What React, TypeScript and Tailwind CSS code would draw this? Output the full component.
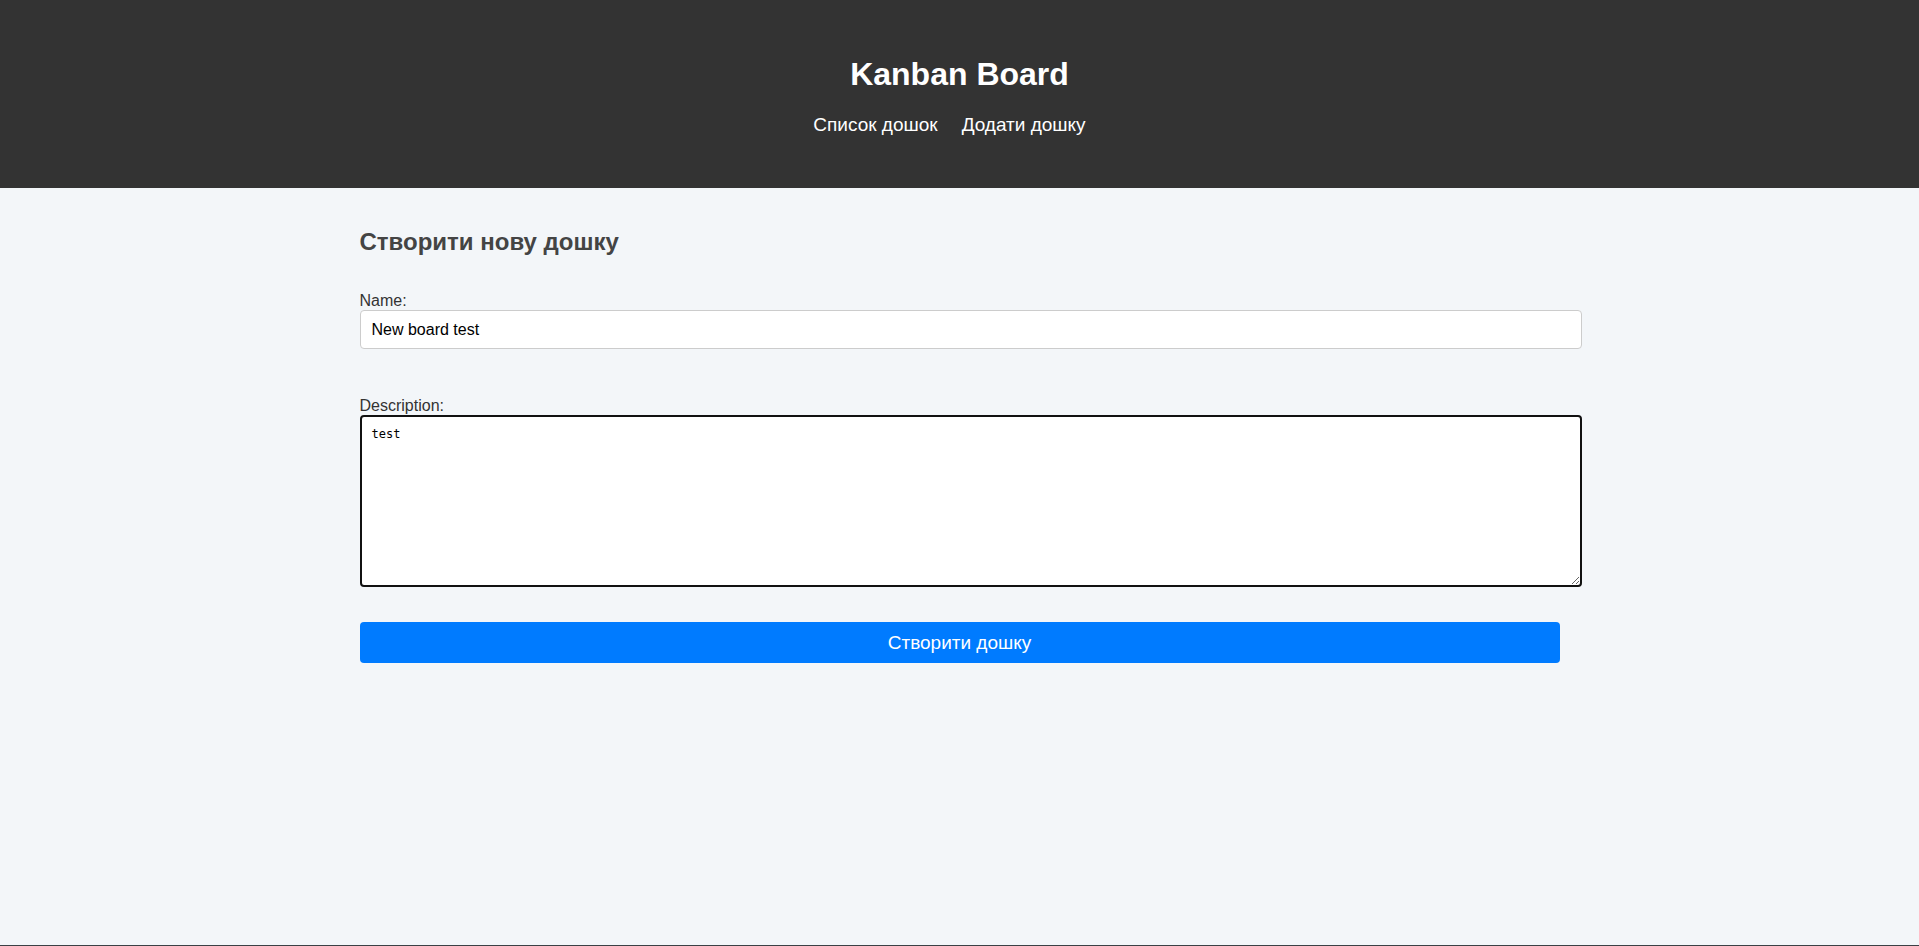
export default function App() {
  return (
    <div className="min-h-[946px] flex flex-col bg-[#f3f6f9]" style={{ fontFamily: '"Liberation Sans", Arial, sans-serif' }}>
      <header className="h-[188px] bg-[#333333] flex flex-col items-center pt-[56px] text-white">
        <h1 className="text-[32px] font-bold leading-[37px]">Kanban Board</h1>
        <nav className="mt-[21px] flex gap-[24px] pr-[20px] text-[19px] leading-[22px]">
          <a href="#" className="text-white">Список дошок</a>
          <a href="#" className="text-white">Додати дошку</a>
        </nav>
      </header>
      <main className="flex-1">
        <div className="w-[1200px] mx-auto pt-[40px]">
          <h2 className="text-[24px] font-bold leading-[28px] text-[#444444]">Створити нову дошку</h2>
          <label className="block mt-[36px] text-[16px] leading-[18px] text-[#333333]">Name:</label>
          <input
            type="text"
            defaultValue="New board test"
            className="block w-[1222px] h-[39px] border border-[#cccccc] rounded-[4px] px-[11px] text-[16px] bg-white text-black outline-none"
          />
          <label className="block mt-[48px] text-[16px] leading-[18px] text-[#333333]">Description:</label>
          <textarea
            defaultValue="test"
            className="block w-[1222px] h-[172px] border-2 border-[#111111] rounded-[4px] px-[10px] pt-[9px] text-[12px] leading-[16px] bg-white text-black outline-none"
            style={{ fontFamily: '"DejaVu Sans Mono", "Liberation Mono", monospace' }}
          />
          <button className="mt-[35px] w-[1200px] h-[41px] bg-[#007bff] text-white rounded-[4px] text-[19px] leading-[22px]">
            Створити дошку
          </button>
        </div>
      </main>
      <div className="h-px bg-[#3b4045]" />
    </div>
  );
}
